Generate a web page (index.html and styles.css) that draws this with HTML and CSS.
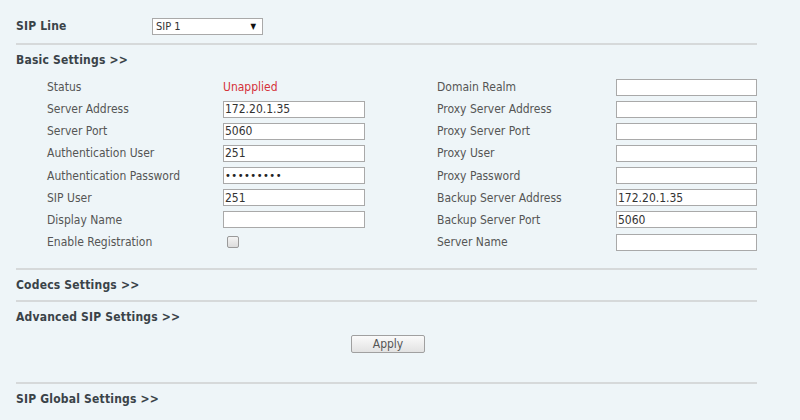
FILE: index.html
```html
<!DOCTYPE html>
<html lang="en">
<head>
    <meta charset="UTF-8">
    <title>SIP Line Settings</title>
    <link rel="stylesheet" href="styles.css">
</head>
<body>
    <div class="page">
        <div class="line-row">
            <span class="line-label">SIP Line</span>
            <div class="select">
                <span>SIP 1</span>
                <span class="arrow">&#9660;</span>
            </div>
        </div>

        <div class="section">
            <div class="section-title">Basic Settings &gt;&gt;</div>
            <div class="fields">
                <span class="label">Status</span>
                <span class="status">Unapplied</span>
                <span class="label">Domain Realm</span>
                <input class="field" type="text" value="">

                <span class="label">Server Address</span>
                <input class="field" type="text" value="172.20.1.35">
                <span class="label">Proxy Server Address</span>
                <input class="field" type="text" value="">

                <span class="label">Server Port</span>
                <input class="field" type="text" value="5060">
                <span class="label">Proxy Server Port</span>
                <input class="field" type="text" value="">

                <span class="label">Authentication User</span>
                <input class="field" type="text" value="251">
                <span class="label">Proxy User</span>
                <input class="field" type="text" value="">

                <span class="label">Authentication Password</span>
                <input class="field pass" type="password" value="123456789">
                <span class="label">Proxy Password</span>
                <input class="field" type="password" value="">

                <span class="label">SIP User</span>
                <input class="field" type="text" value="251">
                <span class="label">Backup Server Address</span>
                <input class="field" type="text" value="172.20.1.35">

                <span class="label">Display Name</span>
                <input class="field" type="text" value="">
                <span class="label">Backup Server Port</span>
                <input class="field" type="text" value="5060">

                <span class="label">Enable Registration</span>
                <span><span class="check"></span></span>
                <span class="label">Server Name</span>
                <input class="field" type="text" value="">
            </div>
        </div>

        <div class="section">
            <div class="section-title">Codecs Settings &gt;&gt;</div>
        </div>

        <div class="section">
            <div class="section-title">Advanced SIP Settings &gt;&gt;</div>
            <div class="actions">
                <button type="button">Apply</button>
            </div>
        </div>

        <div class="section">
            <div class="section-title">SIP Global Settings &gt;&gt;</div>
        </div>
    </div>
</body>
</html>
```

FILE: styles.css
```css
body {
    margin: 0;
    background-color: #eef5f8;
    font-family: "DejaVu Sans Condensed", "DejaVu Sans", sans-serif;
    font-size: 12px;
    color: #555;
}
.page {
    width: 741px;
    padding: 9px 0 0 16px;
}
.line-row {
    display: flex;
    align-items: center;
    height: 34px;
}
.line-label {
    width: 136px;
    font-weight: bold;
    font-size: 12px;
    letter-spacing: 0.2px;
    color: #3a4348;
}
.select {
    display: flex;
    justify-content: space-between;
    align-items: center;
    box-sizing: border-box;
    width: 111px;
    height: 17px;
    padding: 0 6px 0 3px;
    background: #fff;
    border: 1px solid #a9a9a9;
    font-size: 11px;
    color: #333;
}
.arrow {
    font-size: 8px;
    color: #111;
}
.section {
    border-top: 2px solid #d6d9da;
}
.section-title {
    height: 30px;
    line-height: 30px;
    font-weight: bold;
    font-size: 12px;
    letter-spacing: 0.2px;
    color: #3a4348;
}
.fields {
    display: grid;
    grid-template-columns: 176px 142px 72px 179px 141px;
    grid-auto-rows: 22.15px;
    align-items: center;
    padding: 1px 0 15px 31px;
}
.fields .label:nth-child(4n+3) {
    grid-column: 4;
}
.status {
    color: #d5323a;
}
.field {
    box-sizing: border-box;
    width: 100%;
    height: 17px;
    margin: 0;
    padding: 0 1px;
    border: 1px solid #a9a9a9;
    background: #fff;
    font-family: inherit;
    font-size: 12px;
    color: #333;
    outline: none;
}
.pass {
    font-size: 11px;
    letter-spacing: 0.5px;
    color: #222;
}
.check {
    display: block;
    width: 10px;
    height: 10px;
    margin-left: 4px;
    border: 1px solid #9a9a9a;
    border-radius: 2px;
    background: linear-gradient(#f4f4f4, #dcdcdc);
}
.actions {
    display: flex;
    justify-content: center;
    padding: 3px 0 29px;
}
button {
    box-sizing: border-box;
    width: 74px;
    height: 18px;
    margin-left: 3px;
    padding: 0;
    border: 1px solid #a0a0a0;
    border-radius: 2px;
    background: linear-gradient(#fafafa, #e2e2e2);
    font-family: inherit;
    font-size: 12px;
    color: #555;
}
```
